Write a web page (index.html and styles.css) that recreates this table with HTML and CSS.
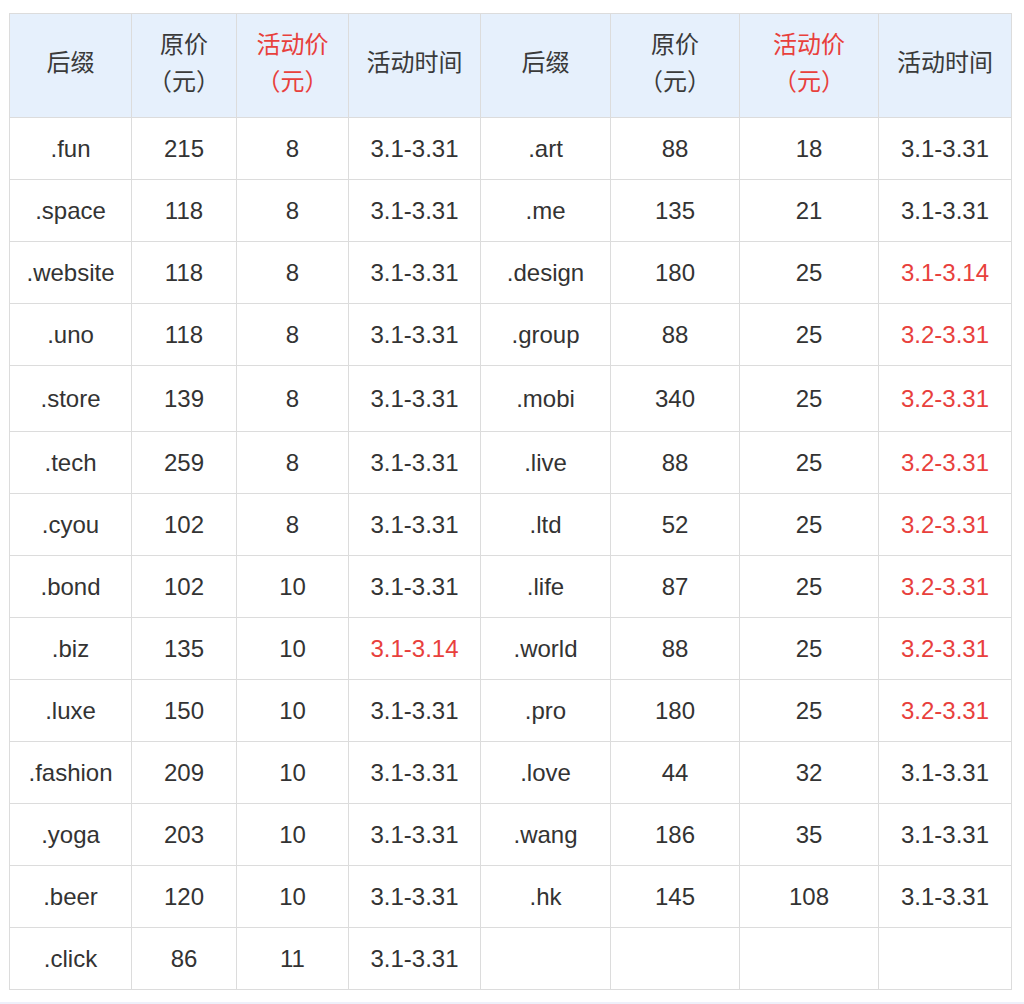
FILE: index.html
```html
<!DOCTYPE html>
<html lang="zh-CN">
<head>
<meta charset="utf-8">
<title>域名活动价</title>
<link rel="stylesheet" href="styles.css">
</head>
<body>
<div class="page">
<table class="price-table">
  <colgroup>
    <col class="c1"><col class="c2"><col class="c3"><col class="c4">
    <col class="c5"><col class="c6"><col class="c7"><col class="c8">
  </colgroup>
  <thead>
    <tr>
      <th>后缀</th><th>原价<br>（元）</th><th class="red">活动价<br>（元）</th><th>活动时间</th>
      <th>后缀</th><th>原价<br>（元）</th><th class="red">活动价<br>（元）</th><th>活动时间</th>
    </tr>
  </thead>
  <tbody>
    <tr><td>.fun</td><td>215</td><td>8</td><td>3.1-3.31</td><td>.art</td><td>88</td><td>18</td><td>3.1-3.31</td></tr>
    <tr><td>.space</td><td>118</td><td>8</td><td>3.1-3.31</td><td>.me</td><td>135</td><td>21</td><td>3.1-3.31</td></tr>
    <tr><td>.website</td><td>118</td><td>8</td><td>3.1-3.31</td><td>.design</td><td>180</td><td>25</td><td class="red">3.1-3.14</td></tr>
    <tr><td>.uno</td><td>118</td><td>8</td><td>3.1-3.31</td><td>.group</td><td>88</td><td>25</td><td class="red">3.2-3.31</td></tr>
    <tr class="tall"><td>.store</td><td>139</td><td>8</td><td>3.1-3.31</td><td>.mobi</td><td>340</td><td>25</td><td class="red">3.2-3.31</td></tr>
    <tr><td>.tech</td><td>259</td><td>8</td><td>3.1-3.31</td><td>.live</td><td>88</td><td>25</td><td class="red">3.2-3.31</td></tr>
    <tr><td>.cyou</td><td>102</td><td>8</td><td>3.1-3.31</td><td>.ltd</td><td>52</td><td>25</td><td class="red">3.2-3.31</td></tr>
    <tr><td>.bond</td><td>102</td><td>10</td><td>3.1-3.31</td><td>.life</td><td>87</td><td>25</td><td class="red">3.2-3.31</td></tr>
    <tr><td>.biz</td><td>135</td><td>10</td><td class="red">3.1-3.14</td><td>.world</td><td>88</td><td>25</td><td class="red">3.2-3.31</td></tr>
    <tr><td>.luxe</td><td>150</td><td>10</td><td>3.1-3.31</td><td>.pro</td><td>180</td><td>25</td><td class="red">3.2-3.31</td></tr>
    <tr><td>.fashion</td><td>209</td><td>10</td><td>3.1-3.31</td><td>.love</td><td>44</td><td>32</td><td>3.1-3.31</td></tr>
    <tr><td>.yoga</td><td>203</td><td>10</td><td>3.1-3.31</td><td>.wang</td><td>186</td><td>35</td><td>3.1-3.31</td></tr>
    <tr><td>.beer</td><td>120</td><td>10</td><td>3.1-3.31</td><td>.hk</td><td>145</td><td>108</td><td>3.1-3.31</td></tr>
    <tr><td>.click</td><td>86</td><td>11</td><td>3.1-3.31</td><td></td><td></td><td></td><td></td></tr>
  </tbody>
</table>
<div class="bottom-band"></div>
</div>
</body>
</html>
```

FILE: styles.css
```css
html, body {
  margin: 0;
  padding: 0;
  background: #ffffff;
}

.page {
  padding-top: 13px;
  padding-left: 9px;
}

.price-table {
  border-collapse: collapse;
  table-layout: fixed;
  width: 1002px;
  font-family: "Liberation Sans", Arial, "Noto Sans CJK SC", sans-serif;
  font-size: 24px;
  color: #333333;
}

.c1 { width: 122px; }
.c2 { width: 105px; }
.c3 { width: 112px; }
.c4 { width: 132px; }
.c5 { width: 130px; }
.c6 { width: 129px; }
.c7 { width: 139px; }
.c8 { width: 133px; }

.price-table th,
.price-table td {
  border: 1px solid #dcdcdc;
  text-align: center;
  vertical-align: middle;
  padding: 0;
}

.price-table th {
  height: 93px;
  padding-bottom: 10px;
  background: #e6f0fc;
  font-weight: normal;
  line-height: 37px;
  font-family: "Noto Sans CJK SC", "Liberation Sans", sans-serif;
  font-size: 24px;
  color: #3a3a3a;
}

.price-table td {
  height: 61px;
  line-height: 28px;
}

.price-table tr.tall td {
  height: 65px;
}

.price-table .red {
  color: #e8403c;
}

.bottom-band {
  margin-top: 12px;
  margin-left: -9px;
  height: 20px;
  background: #eef0fa;
}
```
